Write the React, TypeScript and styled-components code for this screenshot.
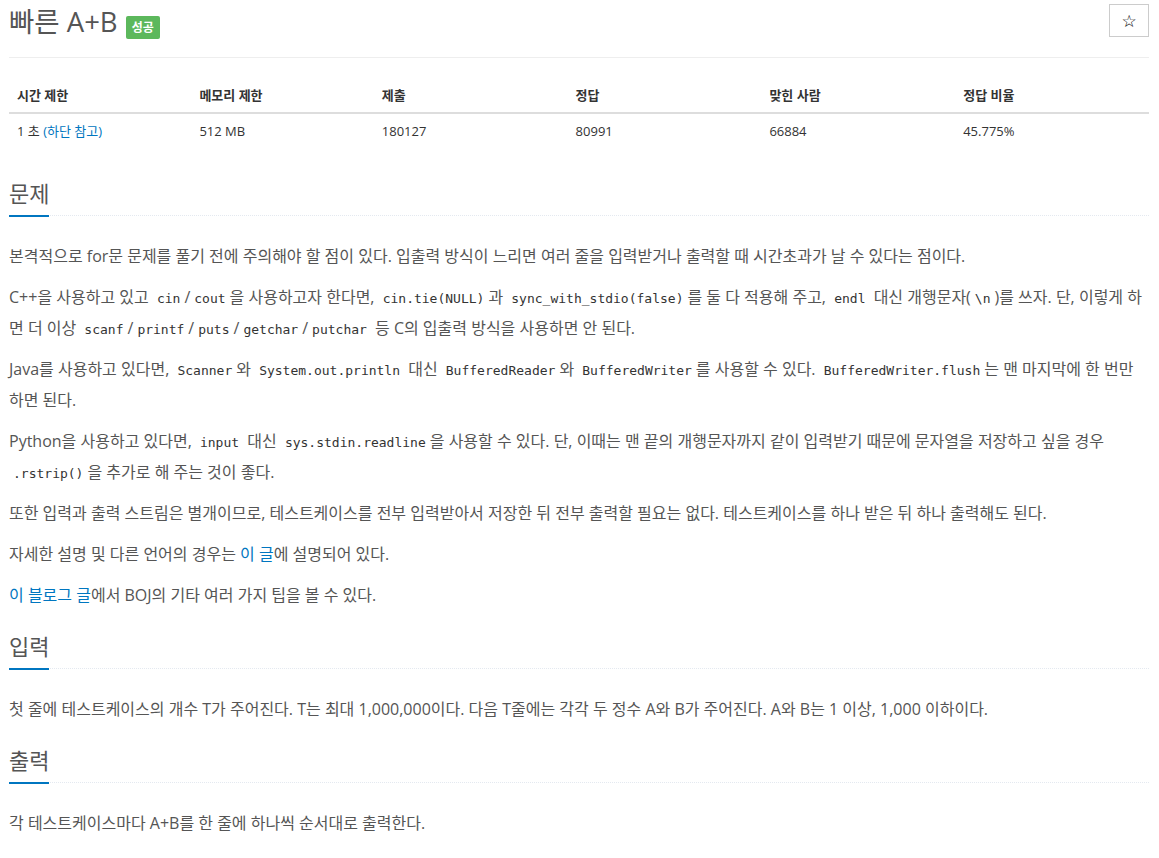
import React from 'react'
import styled, { createGlobalStyle } from 'styled-components'

const GlobalStyle = createGlobalStyle`
  html, body {
    margin: 0;
    padding: 0;
    background: #fff;
    overflow: hidden;
  }
  body {
    font-family: 'Open Sans', 'Noto Sans CJK KR', sans-serif;
    color: #333;
  }
`

const Page = styled.div`
  width: 1140px;
  margin-left: 9px;
`

const Header = styled.div`
  display: flex;
  justify-content: space-between;
  align-items: flex-start;
  padding: 4px 0 17px;
  border-bottom: 1px solid #eee;
`

const Title = styled.h1`
  margin: 0;
  font-size: 27.5px;
  line-height: 36px;
  font-weight: 400;
  color: #555;
`

const Badge = styled.span<{ $color?: string }>`
  display: inline-block;
  margin-left: 8px;
  padding: 4px 6px;
  font-size: 12px;
  line-height: 15px;
  font-weight: 700;
  color: #fff;
  background: ${p => p.$color || '#5cb85c'};
  border-radius: 2px;
  vertical-align: baseline;
`

const StarButton = styled.button`
  width: 40px;
  height: 33px;
  padding: 0;
  border: 1px solid #ccc;
  background: #fff;
  font-family: 'DejaVu Sans', sans-serif;
  font-size: 17px;
  color: #000;
  cursor: pointer;
`

const InfoTable = styled.table`
  width: 100%;
  margin: 20px 0 32px;
  border-collapse: collapse;
  font-size: 13px;
  color: #333;
`

const Th = styled.th<{ $width: number }>`
  width: ${p => p.$width}%;
  padding: 8px;
  line-height: 18px;
  text-align: left;
  font-weight: 700;
  border-bottom: 2px solid #ddd;
`

const Td = styled.td`
  padding: 8px;
  line-height: 18px;
`

const Section = styled.section``

const Headline = styled.div`
  margin: 22px 0 25px;
  border-bottom: 1px dotted #e4e9f0;
`

const HeadlineTitle = styled.h2`
  display: inline-block;
  margin: 0 0 -2px;
  padding-bottom: 9px;
  font-size: 22px;
  line-height: 26px;
  font-weight: 400;
  color: #555;
  border-bottom: 2px solid #0076c0;
`

const Paragraph = styled.p`
  margin: 0 0 10px;
  font-size: 16px;
  line-height: 31px;
  color: #555;
`

const Code = styled.code`
  padding: 2px 4px;
  font-family: 'DejaVu Sans Mono', monospace;
  font-size: 13px;
  line-height: 20px;
  color: #333;
`

const Link = styled.a`
  color: #0076c0;
  text-decoration: none;
`

const columns = [
  { label: '시간 제한', width: 16 },
  { label: '메모리 제한', width: 16 },
  { label: '제출', width: 17 },
  { label: '정답', width: 17 },
  { label: '맞힌 사람', width: 17 },
  { label: '정답 비율', width: 17 },
]

export default function App() {
  return (
    <Page>
      <GlobalStyle />
      <Header>
        <Title>
          빠른 A+B<Badge>성공</Badge>
        </Title>
        <StarButton>☆</StarButton>
      </Header>

      <InfoTable>
        <thead>
          <tr>
            {columns.map(c => (
              <Th key={c.label} $width={c.width}>{c.label}</Th>
            ))}
          </tr>
        </thead>
        <tbody>
          <tr>
            <Td>1 초 <Link href="#">(하단 참고)</Link></Td>
            <Td>512 MB</Td>
            <Td>180127</Td>
            <Td>80991</Td>
            <Td>66884</Td>
            <Td>45.775%</Td>
          </tr>
        </tbody>
      </InfoTable>

      <Section>
        <Headline>
          <HeadlineTitle>문제</HeadlineTitle>
        </Headline>
        <Paragraph>
          본격적으로 for문 문제를 풀기 전에 주의해야 할 점이 있다. 입출력 방식이 느리면 여러 줄을 입력받거나 출력할 때 시간초과가 날 수 있다는 점이다.
        </Paragraph>
        <Paragraph>
          C++을 사용하고 있고 <Code>cin</Code>/<Code>cout</Code>을 사용하고자 한다면, <Code>cin.tie(NULL)</Code>과 <Code>sync_with_stdio(false)</Code>를 둘 다 적용해 주고, <Code>endl</Code> 대신 개행문자(<Code>\n</Code>)를 쓰자. 단, 이렇게 하면 더 이상 <Code>scanf</Code>/<Code>printf</Code>/<Code>puts</Code>/<Code>getchar</Code>/<Code>putchar</Code> 등 C의 입출력 방식을 사용하면 안 된다.
        </Paragraph>
        <Paragraph>
          Java를 사용하고 있다면, <Code>Scanner</Code>와 <Code>System.out.println</Code> 대신 <Code>BufferedReader</Code>와 <Code>BufferedWriter</Code>를 사용할 수 있다. <Code>BufferedWriter.flush</Code>는 맨 마지막에 한 번만 하면 된다.
        </Paragraph>
        <Paragraph>
          Python을 사용하고 있다면, <Code>input</Code> 대신 <Code>sys.stdin.readline</Code>을 사용할 수 있다. 단, 이때는 맨 끝의 개행문자까지 같이 입력받기 때문에 문자열을 저장하고 싶을 경우 <Code>.rstrip()</Code>을 추가로 해 주는 것이 좋다.
        </Paragraph>
        <Paragraph>
          또한 입력과 출력 스트림은 별개이므로, 테스트케이스를 전부 입력받아서 저장한 뒤 전부 출력할 필요는 없다. 테스트케이스를 하나 받은 뒤 하나 출력해도 된다.
        </Paragraph>
        <Paragraph>
          자세한 설명 및 다른 언어의 경우는 <Link href="#">이 글</Link>에 설명되어 있다.
        </Paragraph>
        <Paragraph>
          <Link href="#">이 블로그 글</Link>에서 BOJ의 기타 여러 가지 팁을 볼 수 있다.
        </Paragraph>
      </Section>

      <Section>
        <Headline>
          <HeadlineTitle>입력</HeadlineTitle>
        </Headline>
        <Paragraph>
          첫 줄에 테스트케이스의 개수 T가 주어진다. T는 최대 1,000,000이다. 다음 T줄에는 각각 두 정수 A와 B가 주어진다. A와 B는 1 이상, 1,000 이하이다.
        </Paragraph>
      </Section>

      <Section>
        <Headline>
          <HeadlineTitle>출력</HeadlineTitle>
        </Headline>
        <Paragraph>각 테스트케이스마다 A+B를 한 줄에 하나씩 순서대로 출력한다.</Paragraph>
      </Section>
    </Page>
  )
}
